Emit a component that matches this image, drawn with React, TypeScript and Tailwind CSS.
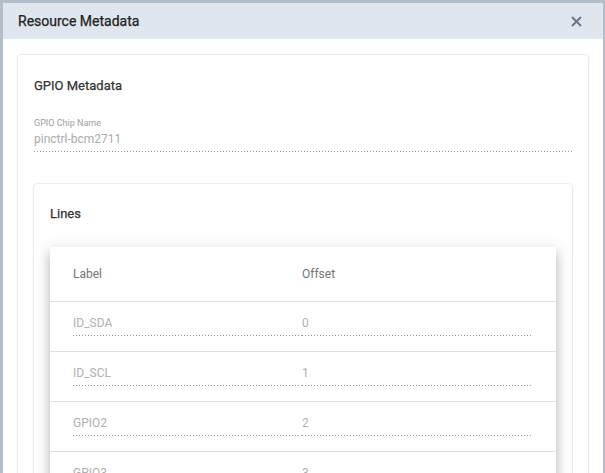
import React from "react";

const lines = [
  { label: "ID_SDA", offset: 0 },
  { label: "ID_SCL", offset: 1 },
  { label: "GPIO2", offset: 2 },
  { label: "GPIO3", offset: 3 },
  { label: "GPIO4", offset: 4 },
];

function Dotted() {
  return (
    <div className="h-px w-full bg-[image:linear-gradient(to_right,rgba(0,0,0,0.4)_1px,transparent_1px)] bg-[length:3px_1px] bg-repeat-x" />
  );
}

function CloseIcon() {
  return (
    <svg width="11" height="11" viewBox="0 0 11 11" className="block">
      <path d="M1 1L10 10M10 1L1 10" stroke="#6b7785" strokeWidth="2" />
    </svg>
  );
}

export default function App() {
  return (
    <div className="w-[605px] h-[473px] overflow-hidden bg-[#b4bec9] pt-[3px] pl-[3px] font-['Roboto',sans-serif]">
      <div className="w-[600px] h-[470px] bg-white flex flex-col">
        <div className="h-[36px] shrink-0 bg-[#dfe6ee] flex items-center justify-between pl-[15px] pr-[21px]">
          <span className="text-[14px] text-[#222] [-webkit-text-stroke:0.25px_#222]">Resource Metadata</span>
          <CloseIcon />
        </div>

        <div className="pt-[15px] pl-[14px] pr-[14px]">
          <div className="rounded border border-[#ececec] shadow-[0_1px_3px_rgba(0,0,0,0.05)] pt-[21px] px-[15px]">
            <h2 className="pl-px text-[13px] leading-[20px] text-[#333] [-webkit-text-stroke:0.25px_#333]">GPIO Metadata</h2>

            <div className="mt-[21px] pl-px">
              <div className="text-[9px] leading-[12px] text-[#9e9e9e]">GPIO Chip Name</div>
              <div className="mt-[2px] text-[12px] leading-[16px] text-[#ababab]">pinctrl-bcm2711</div>
              <div className="mt-[4px]">
                <Dotted />
              </div>
            </div>

            <div className="mt-[31px] rounded border border-[#ececec] shadow-[0_1px_3px_rgba(0,0,0,0.05)] pt-[20px] px-[16px] pb-6">
              <h3 className="text-[13px] leading-[20px] text-[#333] [-webkit-text-stroke:0.25px_#333]">Lines</h3>

              <div className="mt-[23px] bg-white shadow-[0_5px_5px_-3px_rgba(0,0,0,0.2),0_8px_10px_1px_rgba(0,0,0,0.14),0_3px_14px_2px_rgba(0,0,0,0.12)]">
                <div className="h-[55px] grid grid-cols-[229px_1fr] items-center px-[23px] border-b border-[#e0e0e0] text-[12px] text-[#757575]">
                  <span>Label</span>
                  <span>Offset</span>
                </div>
                {lines.map((line) => (
                  <div
                    key={line.label}
                    className="grid grid-cols-[229px_1fr] px-[23px] pt-[13px] pb-[15px] border-b border-[#e0e0e0] text-[12px] leading-[16px] text-[#b0b0b0]"
                  >
                    <div>
                      <div>{line.label}</div>
                      <div className="mt-[4px]">
                        <Dotted />
                      </div>
                    </div>
                    <div>
                      <div>{line.offset}</div>
                      <div className="mt-[4px]">
                        <Dotted />
                      </div>
                    </div>
                  </div>
                ))}
              </div>
            </div>
          </div>
        </div>
      </div>
    </div>
  );
}
